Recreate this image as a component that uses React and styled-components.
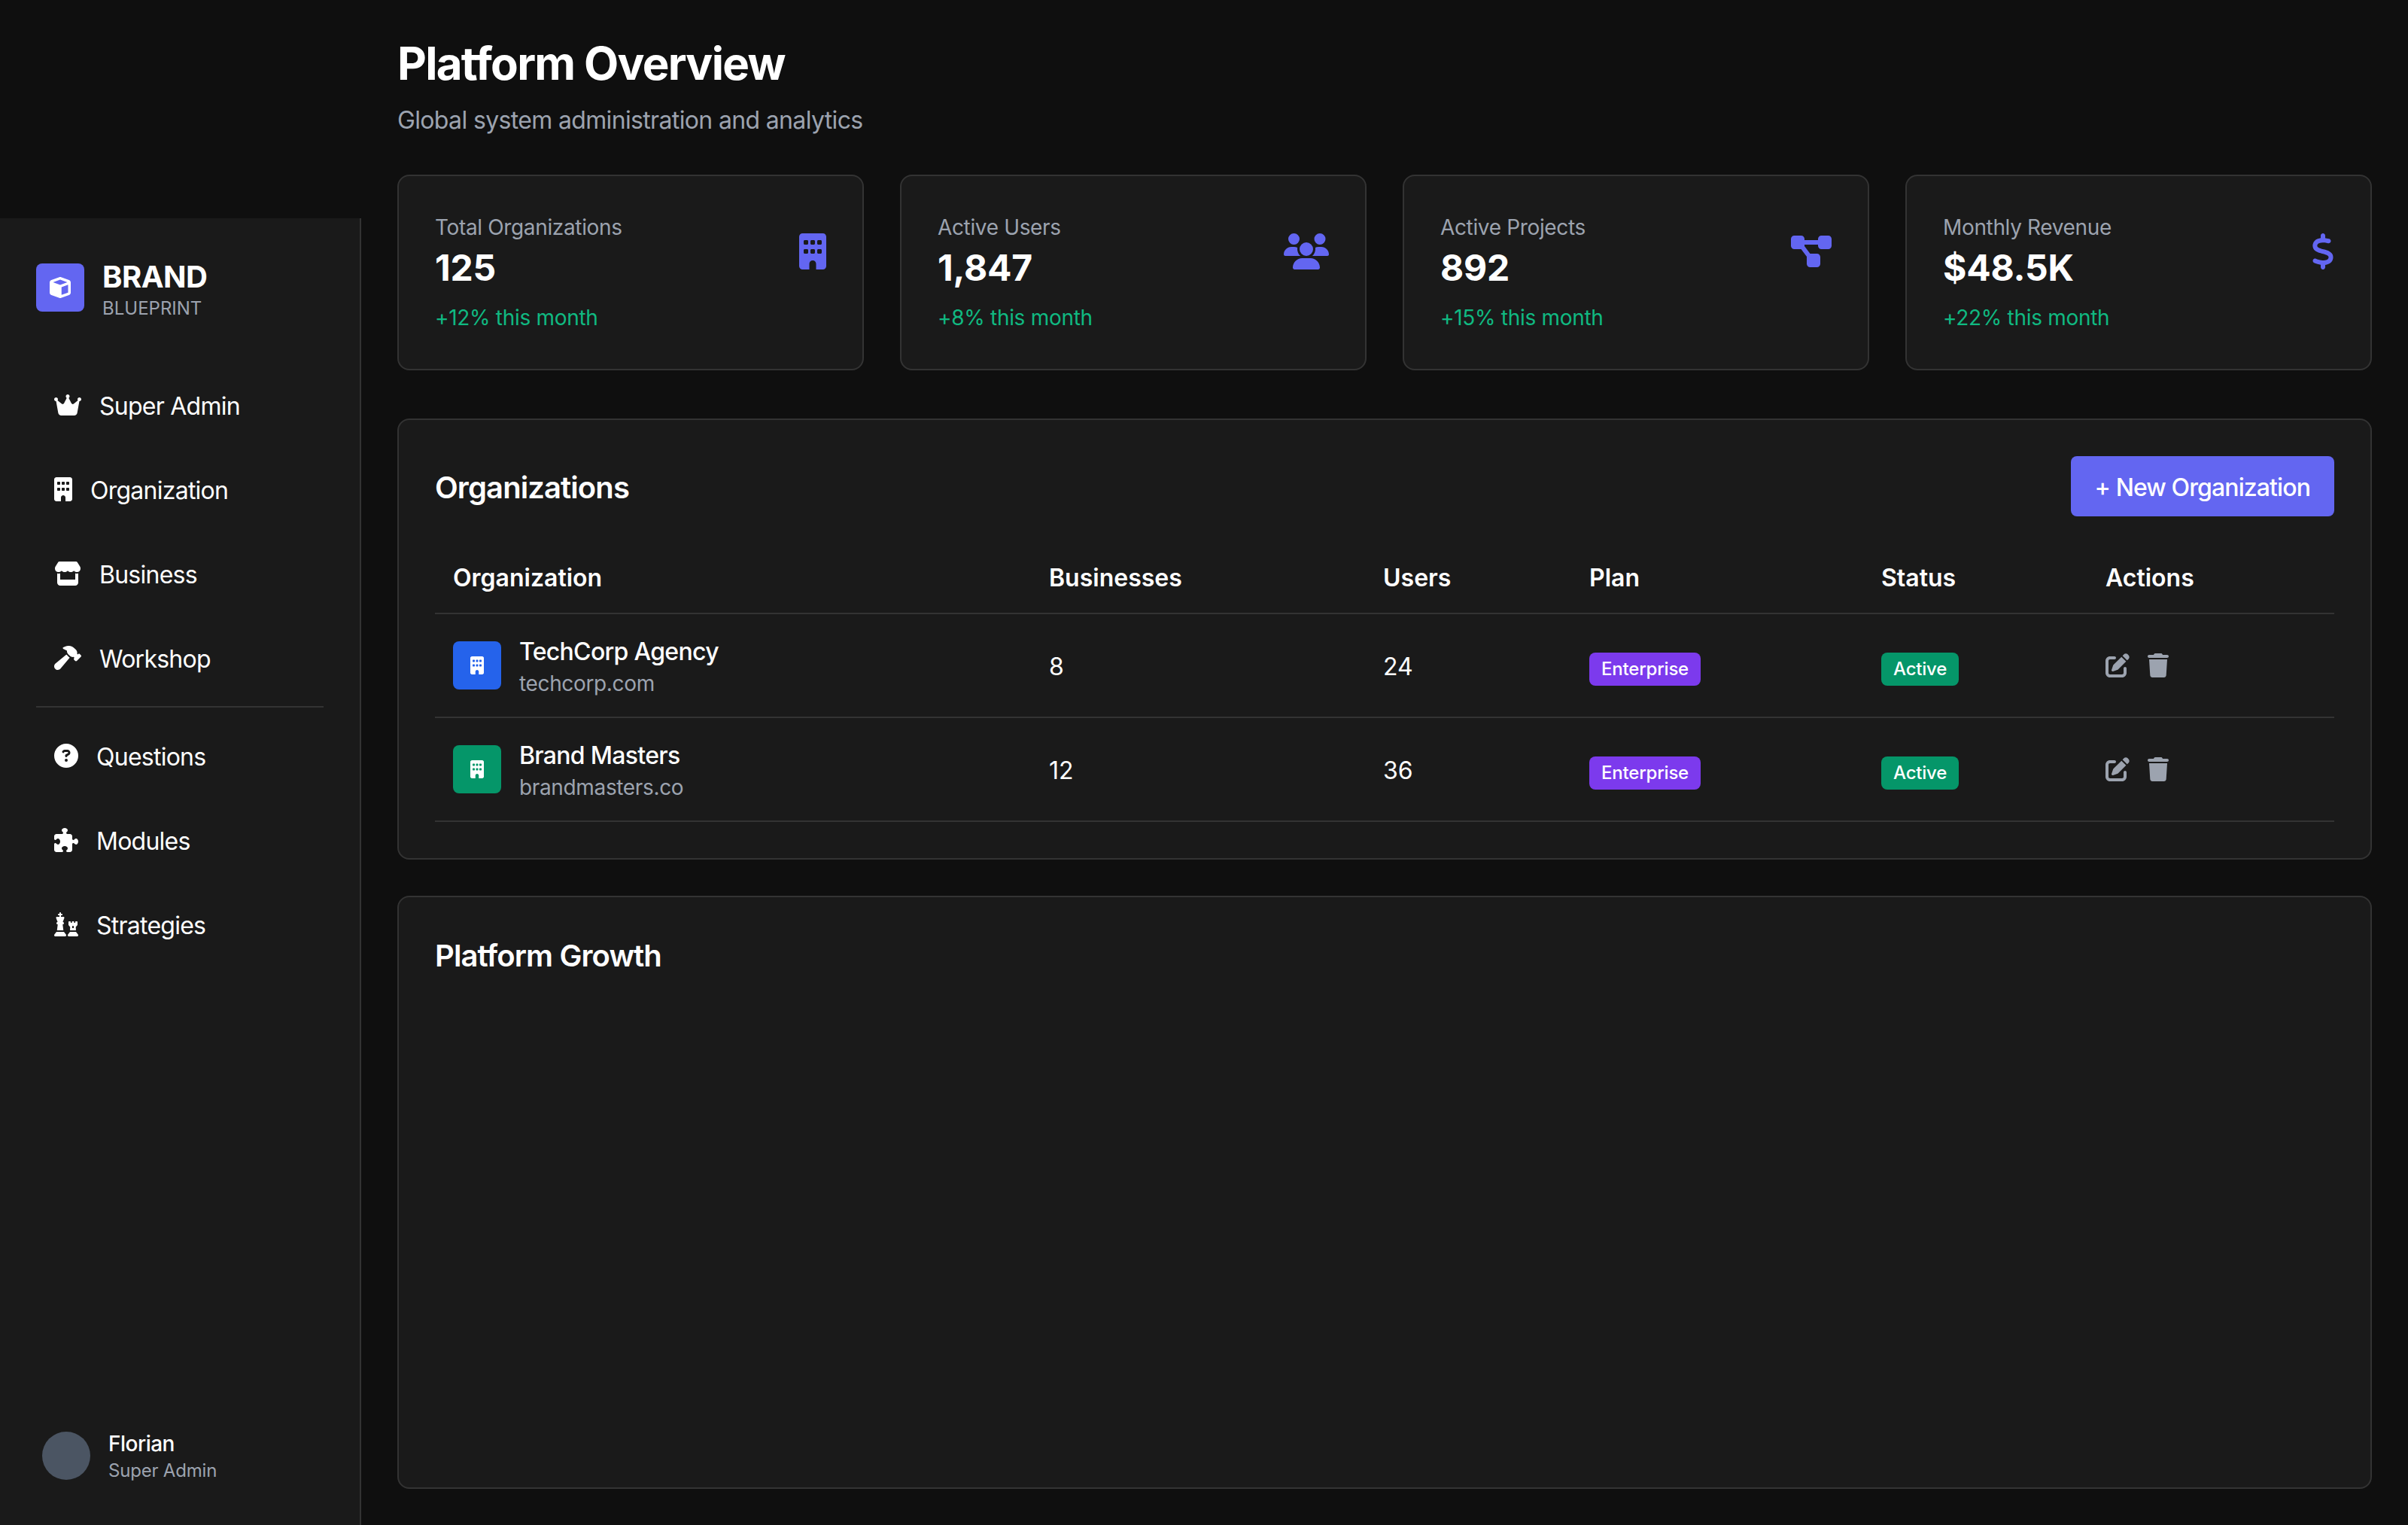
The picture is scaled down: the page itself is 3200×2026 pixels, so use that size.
import React from "react";
import styled, { createGlobalStyle, css } from "styled-components";
import {
  FaBuilding,
  FaChess,
  FaCircleQuestion,
  FaCrown,
  FaCube,
  FaDiagramProject,
  FaDollarSign,
  FaHammer,
  FaPenToSquare,
  FaPuzzlePiece,
  FaStore,
  FaTrash,
  FaUsers,
} from "react-icons/fa6";

const GlobalStyle = createGlobalStyle`
  * { box-sizing: border-box; }
  html, body {
    margin: 0;
    background: #0f0f0f;
    color: #ffffff;
    font-family: Inter, "Noto Sans", sans-serif;
  }
`;

// Inter sits a little higher here than in the reference
const lowerText = css`
  padding-top: 2px;
  margin-bottom: -2px;
`;

// react-icons forces 1em by 1em, font awesome glyphs are wider or narrower
const Glyph = styled.span`
  display: flex;
  flex: none;
  svg {
    width: ${(p) => p.$ratio || 1}em;
    height: 1em;
  }
`;

const Page = styled.div`
  display: flex;
  min-height: 2026px;
  background: #0f0f0f;
`;

const Sidebar = styled.aside`
  flex: 0 0 480px;
  margin-top: 290px;
  padding: 48px;
  display: flex;
  flex-direction: column;
  background: #1a1a1a;
  border-right: 2px solid #333333;
`;

const Brand = styled.div`
  display: flex;
  align-items: center;
  gap: 24px;
  margin-bottom: 64px;
`;

const BrandLogo = styled.div`
  width: 64px;
  height: 64px;
  display: flex;
  align-items: center;
  justify-content: center;
  border-radius: 8px;
  background: #6366f1;
  font-size: 28px;
`;

const BrandName = styled.div`
  ${lowerText}
  font-size: 40px;
  line-height: 56px;
  font-weight: 700;
  letter-spacing: -0.5px;
`;

const BrandSub = styled.div`
  font-size: 24px;
  line-height: 32px;
  color: #9ca3af;
`;

const NavList = styled.nav`
  display: flex;
  flex-direction: column;
  gap: 16px;
`;

const NavItem = styled.a`
  display: flex;
  align-items: center;
  gap: 24px;
  padding: 24px;
  font-size: 32px;
  line-height: 48px;
  letter-spacing: -0.75px;
  color: #ffffff;
`;

const NavLabel = styled.span`
  ${lowerText}
`;

const Divider = styled.hr`
  height: 2px;
  margin: 16px 0;
  border: 0;
  background: #333333;
`;

const UserBox = styled.div`
  margin-top: auto;
  padding: 8px;
  display: flex;
  align-items: center;
  gap: 24px;
`;

const Avatar = styled.div`
  width: 64px;
  height: 64px;
  border-radius: 50%;
  background: #4b5563;
`;

const UserName = styled.div`
  font-size: 28px;
  line-height: 40px;
  font-weight: 500;
  letter-spacing: -0.5px;
`;

const UserRole = styled.div`
  font-size: 24px;
  line-height: 32px;
  letter-spacing: -0.2px;
  color: #9ca3af;
`;

const Main = styled.main`
  flex: 1;
  min-width: 0;
  padding: 48px;
  display: flex;
  flex-direction: column;
`;

const Title = styled.h1`
  margin: 0;
  font-size: 60px;
  line-height: 72px;
  font-weight: 700;
  letter-spacing: -1.7px;
`;

const Subtitle = styled.p`
  margin: 16px 0 48px;
  font-size: 32px;
  line-height: 48px;
  letter-spacing: -0.65px;
  color: #9ca3af;
`;

const Stats = styled.div`
  display: grid;
  grid-template-columns: repeat(4, 1fr);
  gap: 48px;
  margin-bottom: 64px;
`;

const Panel = styled.section`
  padding: 48px;
  background: #1a1a1a;
  border: 2px solid #333333;
  border-radius: 16px;
`;

const GrowthPanel = styled(Panel)`
  flex: 1;
  margin-top: 48px;
`;

const StatTop = styled.div`
  display: flex;
  align-items: center;
  justify-content: space-between;
`;

const StatLabel = styled.div`
  font-size: 28px;
  line-height: 40px;
  letter-spacing: -0.35px;
  color: #9ca3af;
`;

const StatValue = styled.div`
  ${lowerText}
  font-size: 48px;
  line-height: 64px;
  font-weight: 700;
  letter-spacing: -0.2px;
`;

const StatIcon = styled(Glyph)`
  font-size: 48px;
  color: #6366f1;
`;

const StatChange = styled.div`
  margin-top: 16px;
  font-size: 28px;
  line-height: 40px;
  letter-spacing: -0.3px;
  color: #10b981;
`;

const PanelHead = styled.div`
  display: flex;
  align-items: center;
  justify-content: space-between;
  margin-bottom: 32px;
`;

const PanelTitle = styled.h2`
  margin: 0;
  ${lowerText}
  font-size: 40px;
  line-height: 56px;
  font-weight: 600;
  letter-spacing: -0.9px;
`;

const NewButton = styled.button`
  height: 80px;
  padding: 18px 32px 14px;
  border: 0;
  border-radius: 8px;
  background: #6366f1;
  color: #ffffff;
  font-family: inherit;
  font-size: 32px;
  line-height: 48px;
  font-weight: 500;
  letter-spacing: -0.9px;
`;

const Table = styled.table`
  width: 100%;
  table-layout: fixed;
  border-collapse: separate;
  border-spacing: 0;
`;

const Th = styled.th`
  width: ${(p) => p.$w}px;
  padding: 26px 24px 22px;
  border-bottom: 2px solid #333333;
  text-align: left;
  font-size: 32px;
  line-height: 48px;
  font-weight: 600;
`;

const Td = styled.td`
  padding: ${(p) => (p.$lower ? "26px 24px 22px" : "24px")};
  border-bottom: 2px solid #333333;
  font-size: 32px;
  line-height: 48px;
`;

const OrgCell = styled.div`
  display: flex;
  align-items: center;
  gap: 24px;
`;

const OrgLogo = styled.div`
  width: 64px;
  height: 64px;
  display: flex;
  align-items: center;
  justify-content: center;
  border-radius: 8px;
  background: ${(p) => p.$color};
  font-size: 24px;
`;

const OrgName = styled.div`
  ${lowerText}
  font-weight: 500;
  letter-spacing: -0.7px;
`;

const OrgDomain = styled.div`
  font-size: 28px;
  line-height: 40px;
  letter-spacing: -0.35px;
  color: #9ca3af;
`;

const Pill = styled.span`
  display: inline-block;
  padding: 6px 16px;
  border-radius: 8px;
  background: ${(p) => p.$color};
  font-size: 24px;
  line-height: 32px;
  font-weight: 500;
  letter-spacing: -0.2px;
`;

const Actions = styled.div`
  display: flex;
  gap: 24px;
  color: #9ca3af;
`;

const mainNav = [
  { label: "Super Admin", icon: <FaCrown />, ratio: 1.125 },
  { label: "Organization", icon: <FaBuilding />, ratio: 0.75 },
  { label: "Business", icon: <FaStore />, ratio: 1.125 },
  { label: "Workshop", icon: <FaHammer />, ratio: 1.125 },
];

const toolNav = [
  { label: "Questions", icon: <FaCircleQuestion /> },
  { label: "Modules", icon: <FaPuzzlePiece /> },
  { label: "Strategies", icon: <FaChess /> },
];

const stats = [
  { label: "Total Organizations", value: "125", change: "+12% this month", icon: <FaBuilding />, ratio: 0.75 },
  { label: "Active Users", value: "1,847", change: "+8% this month", icon: <FaUsers />, ratio: 1.25 },
  { label: "Active Projects", value: "892", change: "+15% this month", icon: <FaDiagramProject />, ratio: 1.125 },
  { label: "Monthly Revenue", value: "$48.5K", change: "+22% this month", icon: <FaDollarSign />, ratio: 0.625 },
];

const columns = [
  { label: "Organization", w: 792 },
  { label: "Businesses", w: 444 },
  { label: "Users", w: 274 },
  { label: "Plan", w: 388 },
  { label: "Status", w: 298 },
  { label: "Actions", w: 328 },
];

const orgs = [
  { name: "TechCorp Agency", domain: "techcorp.com", color: "#2563eb", businesses: 8, users: 24 },
  { name: "Brand Masters", domain: "brandmasters.co", color: "#059669", businesses: 12, users: 36 },
];

const renderNav = (items) =>
  items.map((item) => (
    <NavItem key={item.label}>
      <Glyph $ratio={item.ratio}>{item.icon}</Glyph>
      <NavLabel>{item.label}</NavLabel>
    </NavItem>
  ));

const App = () => {
  return (
    <Page>
      <GlobalStyle />
      <Sidebar>
        <Brand>
          <BrandLogo>
            <FaCube />
          </BrandLogo>
          <div>
            <BrandName>BRAND</BrandName>
            <BrandSub>BLUEPRINT</BrandSub>
          </div>
        </Brand>
        <NavList>{renderNav(mainNav)}</NavList>
        <Divider />
        <NavList>{renderNav(toolNav)}</NavList>
        <UserBox>
          <Avatar />
          <div>
            <UserName>Florian</UserName>
            <UserRole>Super Admin</UserRole>
          </div>
        </UserBox>
      </Sidebar>
      <Main>
        <Title>Platform Overview</Title>
        <Subtitle>Global system administration and analytics</Subtitle>
        <Stats>
          {stats.map((s) => (
            <Panel key={s.label}>
              <StatTop>
                <div>
                  <StatLabel>{s.label}</StatLabel>
                  <StatValue>{s.value}</StatValue>
                </div>
                <StatIcon $ratio={s.ratio}>{s.icon}</StatIcon>
              </StatTop>
              <StatChange>{s.change}</StatChange>
            </Panel>
          ))}
        </Stats>
        <Panel>
          <PanelHead>
            <PanelTitle>Organizations</PanelTitle>
            <NewButton>+ New Organization</NewButton>
          </PanelHead>
          <Table>
            <thead>
              <tr>
                {columns.map((c) => (
                  <Th key={c.label} $w={c.w}>
                    {c.label}
                  </Th>
                ))}
              </tr>
            </thead>
            <tbody>
              {orgs.map((o) => (
                <tr key={o.name}>
                  <Td>
                    <OrgCell>
                      <OrgLogo $color={o.color}>
                        <Glyph $ratio={0.75}>
                          <FaBuilding />
                        </Glyph>
                      </OrgLogo>
                      <div>
                        <OrgName>{o.name}</OrgName>
                        <OrgDomain>{o.domain}</OrgDomain>
                      </div>
                    </OrgCell>
                  </Td>
                  <Td $lower>{o.businesses}</Td>
                  <Td $lower>{o.users}</Td>
                  <Td $lower>
                    <Pill $color="#7c3aed">Enterprise</Pill>
                  </Td>
                  <Td $lower>
                    <Pill $color="#059669">Active</Pill>
                  </Td>
                  <Td>
                    <Actions>
                      <Glyph>
                        <FaPenToSquare />
                      </Glyph>
                      <Glyph $ratio={0.875}>
                        <FaTrash />
                      </Glyph>
                    </Actions>
                  </Td>
                </tr>
              ))}
            </tbody>
          </Table>
        </Panel>
        <GrowthPanel>
          <PanelTitle>Platform Growth</PanelTitle>
        </GrowthPanel>
      </Main>
    </Page>
  );
};

export default App;
